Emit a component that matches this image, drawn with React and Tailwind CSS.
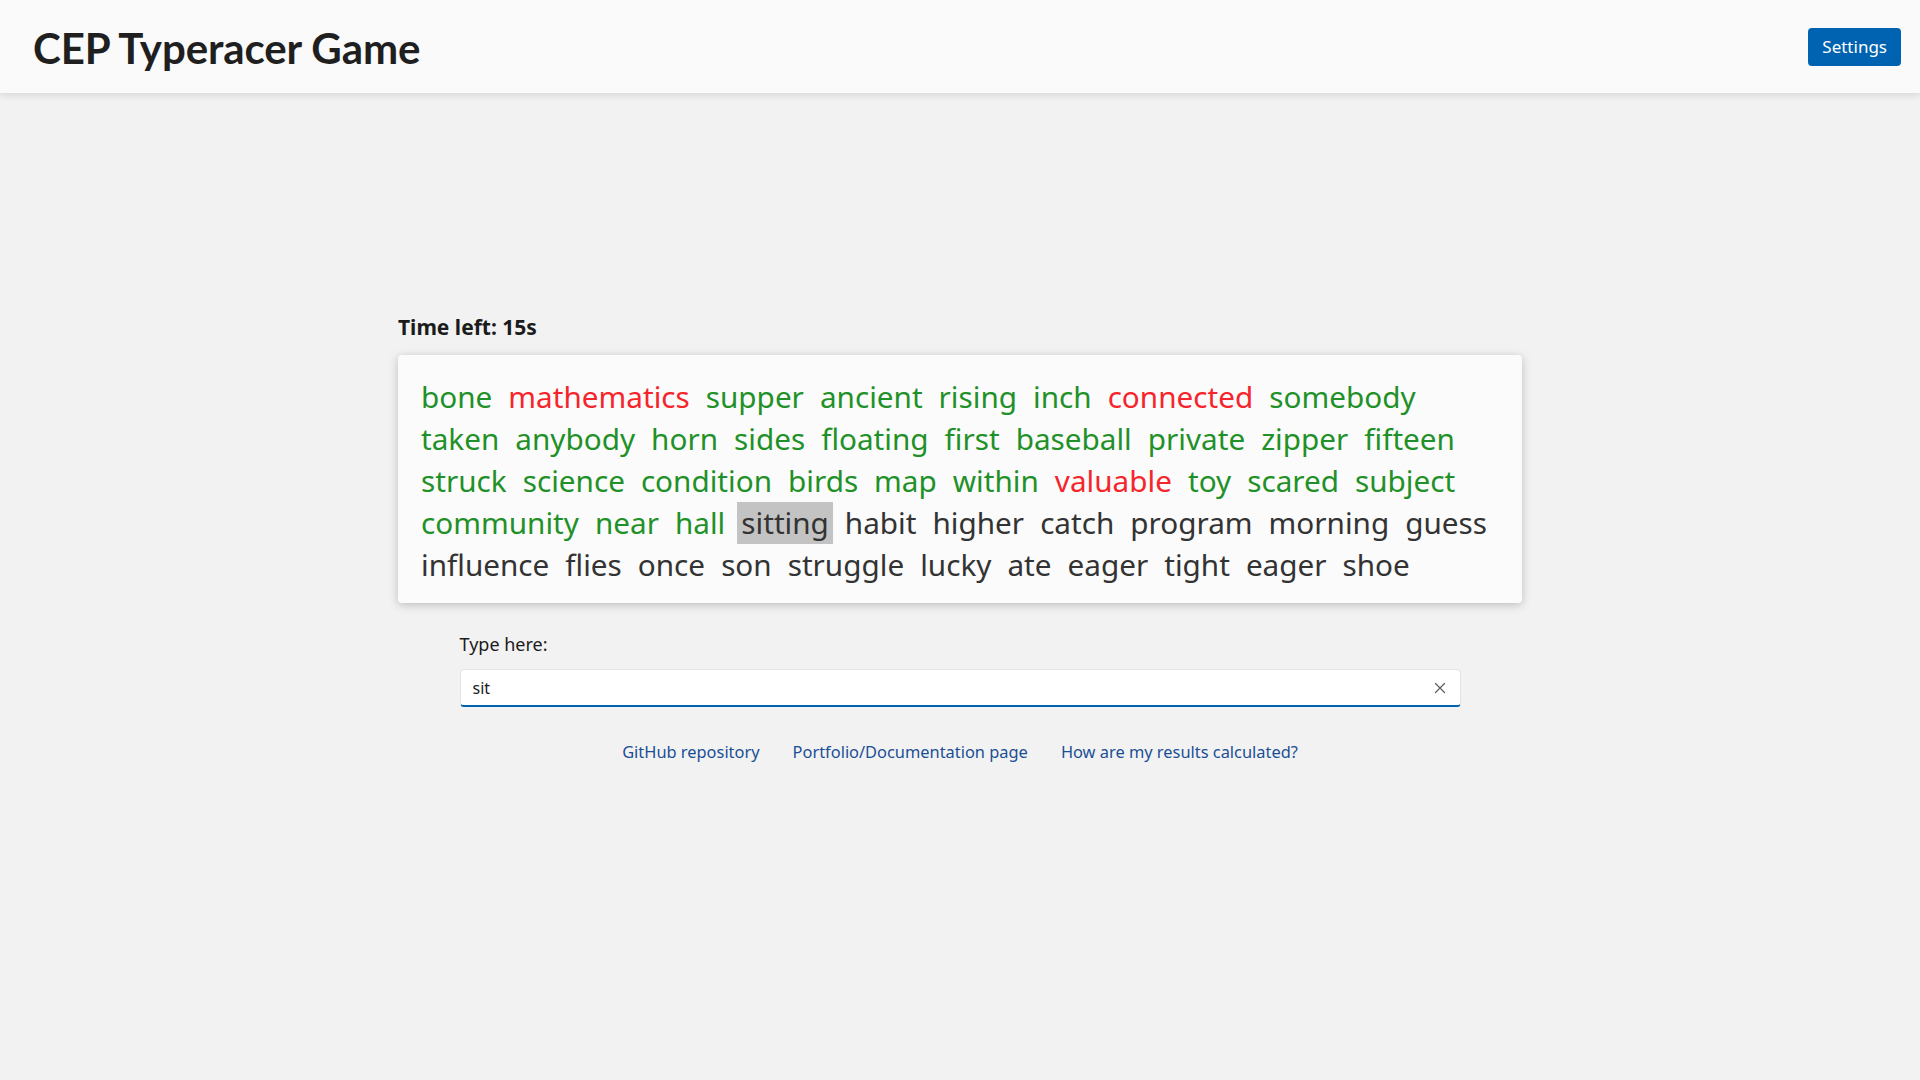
import React, { useState } from "react";

const rows = [
  [
    ["bone", "ok"],
    ["mathematics", "bad"],
    ["supper", "ok"],
    ["ancient", "ok"],
    ["rising", "ok"],
    ["inch", "ok"],
    ["connected", "bad"],
    ["somebody", "ok"],
  ],
  [
    ["taken", "ok"],
    ["anybody", "ok"],
    ["horn", "ok"],
    ["sides", "ok"],
    ["floating", "ok"],
    ["first", "ok"],
    ["baseball", "ok"],
    ["private", "ok"],
    ["zipper", "ok"],
    ["fifteen", "ok"],
  ],
  [
    ["struck", "ok"],
    ["science", "ok"],
    ["condition", "ok"],
    ["birds", "ok"],
    ["map", "ok"],
    ["within", "ok"],
    ["valuable", "bad"],
    ["toy", "ok"],
    ["scared", "ok"],
    ["subject", "ok"],
  ],
  [
    ["community", "ok"],
    ["near", "ok"],
    ["hall", "ok"],
    ["sitting", "current"],
    ["habit", "todo"],
    ["higher", "todo"],
    ["catch", "todo"],
    ["program", "todo"],
    ["morning", "todo"],
    ["guess", "todo"],
  ],
  [
    ["influence", "todo"],
    ["flies", "todo"],
    ["once", "todo"],
    ["son", "todo"],
    ["struggle", "todo"],
    ["lucky", "todo"],
    ["ate", "todo"],
    ["eager", "todo"],
    ["tight", "todo"],
    ["eager", "todo"],
    ["shoe", "todo"],
  ],
];

function Word({ text, state }) {
  if (state === "ok") return <span className="text-[#1f9128]">{text}</span>;
  if (state === "bad") return <span className="text-[#f5252b]">{text}</span>;
  if (state === "current")
    return (
      <span className="-mx-[4px] bg-[#c3c3c3] px-[4px] text-[#333333]">
        {text}
      </span>
    );
  return <span className="text-[#333333]">{text}</span>;
}

export default function App() {
  const [typed, setTyped] = useState("sit");

  return (
    <div className="min-h-screen bg-[#f2f2f2] font-['Noto_Sans',sans-serif] text-[#1b1b1b]">
      <header className="flex h-[93px] items-center justify-between bg-[#fafafa] pl-[33px] pr-[19px] shadow-[0_2px_8px_rgba(0,0,0,0.12)]">
        <h1 className="mt-[4px] font-['Lato',sans-serif] text-[42px] font-bold tracking-[-0.1px] text-[#1f1f1f]">
          CEP Typeracer Game
        </h1>
        <button className="h-[38px] rounded-[4px] bg-[#0063b1] px-[14px] text-[17px] text-white">
          Settings
        </button>
      </header>

      <main className="flex justify-center pt-[219px]">
        <div className="flex w-[1124px] flex-col">
          <p className="text-[21px] font-bold leading-[30px] text-[#1b1b1b]">
            Time left: 15s
          </p>

          <div className="mt-[13px] rounded-[4px] bg-[#fbfbfb] pb-[17px] pl-[23px] pr-[20px] pt-[21px] shadow-[0_2px_10px_rgba(0,0,0,0.22)]">
            {rows.map((row, i) => (
              <div
                key={i}
                className="flex gap-x-[16px] text-[29.7px] leading-[42px]"
              >
                {row.map(([w, s], j) => (
                  <Word key={j} text={w} state={s} />
                ))}
              </div>
            ))}
          </div>

          <div className="mx-auto mt-[29px] w-[1001px]">
            <label className="block text-[18px] leading-[24px] text-[#1b1b1b]">
              Type here:
            </label>
            <div className="relative mt-[13px] flex h-[38px] items-center rounded-[4px] border border-[#e3e3e3] border-b-2 border-b-[#0063b1] bg-white">
              <input
                value={typed}
                onChange={(e) => setTyped(e.target.value)}
                className="h-full w-full bg-transparent pl-[12px] pr-[40px] text-[16px] text-[#1b1b1b] outline-none"
              />
              <button
                onClick={() => setTyped("")}
                className="absolute right-[10px] top-1/2 flex h-[20px] w-[20px] -translate-y-1/2 items-center justify-center text-[#5c5c5c]"
              >
                <svg width="12" height="12" viewBox="0 0 12 12" fill="none">
                  <path
                    d="M1.5 1.5l9 9M10.5 1.5l-9 9"
                    stroke="currentColor"
                    strokeWidth="1.2"
                    strokeLinecap="round"
                  />
                </svg>
              </button>
            </div>
          </div>

          <nav className="mt-[33px] flex justify-center gap-x-[33px] text-[16.4px] text-[#1a4f95]">
            <a href="#">GitHub repository</a>
            <a href="#">Portfolio/Documentation page</a>
            <a href="#">How are my results calculated?</a>
          </nav>
        </div>
      </main>
    </div>
  );
}
